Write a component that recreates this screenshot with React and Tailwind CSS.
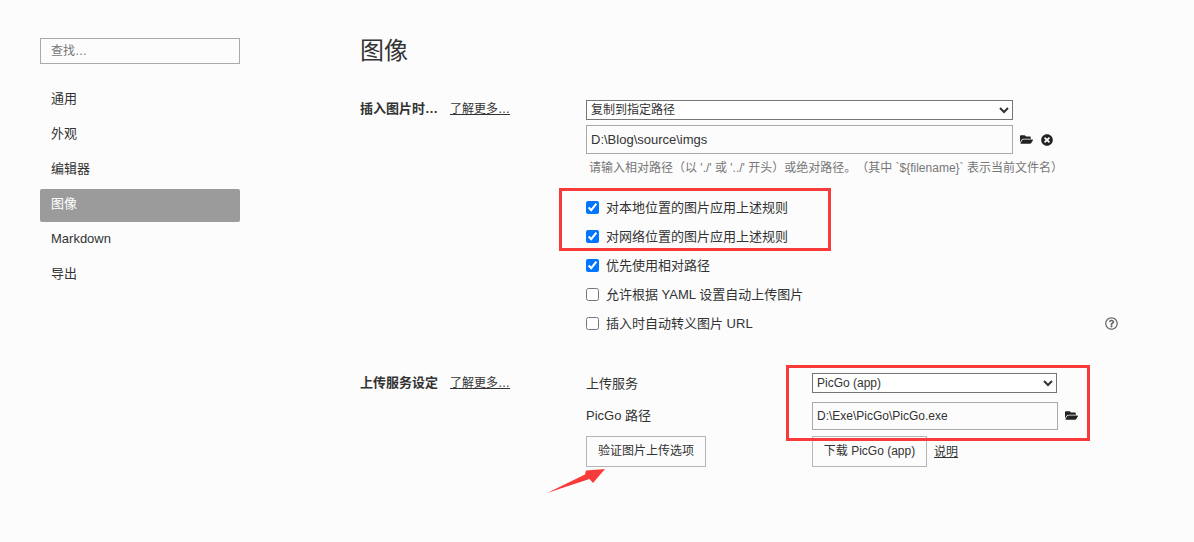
import React from "react";
import { FaFolderOpen, FaTimesCircle, FaRegQuestionCircle } from "react-icons/fa";

const NAV = ["通用", "外观", "编辑器", "图像", "Markdown", "导出"];
const CHECKS = [
  ["对本地位置的图片应用上述规则", true],
  ["对网络位置的图片应用上述规则", true],
  ["优先使用相对路径", true],
  ["允许根据 YAML 设置自动上传图片", false],
  ["插入时自动转义图片 URL", false],
];

function SectionLabel({ title }) {
  return (
    <div className="w-[226px] shrink-0 flex items-start text-[13px] leading-[16px]">
      <span className="font-bold w-[90px] text-[#333]">{title}</span>
      <a className="underline text-[12px] text-[#333]">了解更多…</a>
    </div>
  );
}

export default function App() {
  return (
    <div className="w-[1194px] h-[542px] overflow-hidden relative flex bg-[#fcfcfc] text-[#333] text-[13px] font-['Liberation_Sans','Noto_Sans_CJK_SC',sans-serif]">
      <aside className="w-[200px] ml-[40px] pt-[38px] shrink-0">
        <input
          placeholder="查找…"
          className="w-full h-[26px] px-[10px] border border-[#aaaaaa] bg-transparent text-[12px] outline-none placeholder:text-[#757575]"
        />
        <nav className="mt-[20px] flex flex-col gap-[2px]">
          {NAV.map((n) => (
            <div
              key={n}
              className={
                "h-[33px] pl-[11px] flex items-center rounded-[2px] pb-[3px] " +
                (n === "图像" ? "bg-[#9b9b9b] text-white" : "")
              }
            >
              {n}
            </div>
          ))}
        </nav>
      </aside>

      <main className="ml-[120px] w-[758px] pt-[35px]">
        <h1 className="text-[24px] leading-[32px] font-normal text-[#333]">图像</h1>

        <section className="flex mt-[33px]">
          <div className="pt-[1px]">
            <SectionLabel title="插入图片时…" />
          </div>
          <div className="flex-1">
            <select className="block w-[427px] h-[20px] border border-[#767676] bg-white text-[12px]">
              <option>复制到指定路径</option>
            </select>
            <div className="flex items-center mt-[5px]">
              <input
                defaultValue="D:\Blog\source\imgs"
                className="w-[427px] h-[29px] px-[4px] border border-[#aaaaaa] bg-transparent text-[13px] outline-none"
              />
              <FaFolderOpen className="ml-[7px] text-[13px] text-[#222]" />
              <FaTimesCircle className="ml-[8px] text-[12px] text-[#222]" />
            </div>
            <p className="mt-[6px] pl-[3px] text-[12px] leading-[16px] text-[#777777] whitespace-nowrap [text-spacing-trim:space-all]">
              请输入相对路径（以 './' 或 '../' 开头）或绝对路径。（其中 `${"{filename}"}` 表示当前文件名）
            </p>
            <div className="mt-[17px] flex flex-col">
              {CHECKS.map(([t, c], i) => (
                <label key={t} className="h-[29px] flex items-center">
                  <input
                    type="checkbox"
                    defaultChecked={c}
                    className="w-[13px] h-[13px] accent-[#0075ff]"
                  />
                  <span className="ml-[7px]">{t}</span>
                  {i === 4 && <FaRegQuestionCircle className="ml-auto text-[13px] text-[#666]" />}
                </label>
              ))}
            </div>
          </div>
        </section>

        <section className="flex mt-[35px]">
          <div className="pt-[2px]">
            <SectionLabel title="上传服务设定" />
          </div>
          <div className="flex-1">
            <div className="flex items-center">
              <span className="w-[226px] shrink-0 pt-[1px]">上传服务</span>
              <select className="w-[245px] h-[20px] border border-[#767676] bg-white text-[12px]">
                <option>PicGo (app)</option>
              </select>
            </div>
            <div className="flex items-center mt-[8px]">
              <span className="w-[226px] shrink-0">PicGo 路径</span>
              <input
                defaultValue="D:\Exe\PicGo\PicGo.exe"
                className="w-[246px] h-[28px] px-[4px] border border-[#aaaaaa] bg-transparent text-[12px] outline-none"
              />
              <FaFolderOpen className="ml-[7px] text-[13px] text-[#222]" />
            </div>
            <div className="flex items-start mt-[6px]">
              <div className="w-[226px] shrink-0">
                <button className="w-[120px] h-[31px] border border-[#b5b5b5] text-[12px]">验证图片上传选项</button>
              </div>
              <button className="w-[115px] h-[31px] border border-[#b5b5b5] text-[12px]">下载 PicGo (app)</button>
              <a className="ml-[7px] mt-[7px] underline text-[12px]">说明</a>
            </div>
          </div>
        </section>
      </main>

      <div className="absolute left-[559px] top-[188px] w-[272px] h-[63px] border-[3px] border-[#f93a3a] pointer-events-none" />
      <div className="absolute left-[786px] top-[365px] w-[304px] h-[76px] border-[3px] border-[#f93a3a] pointer-events-none" />
      <svg className="absolute left-0 top-0 pointer-events-none" width="1194" height="542">
        <polygon points="547,493 585,474.5 586,470.5 605,469 593,483 589.5,479" fill="#f93a3a" />
      </svg>
    </div>
  );
}
